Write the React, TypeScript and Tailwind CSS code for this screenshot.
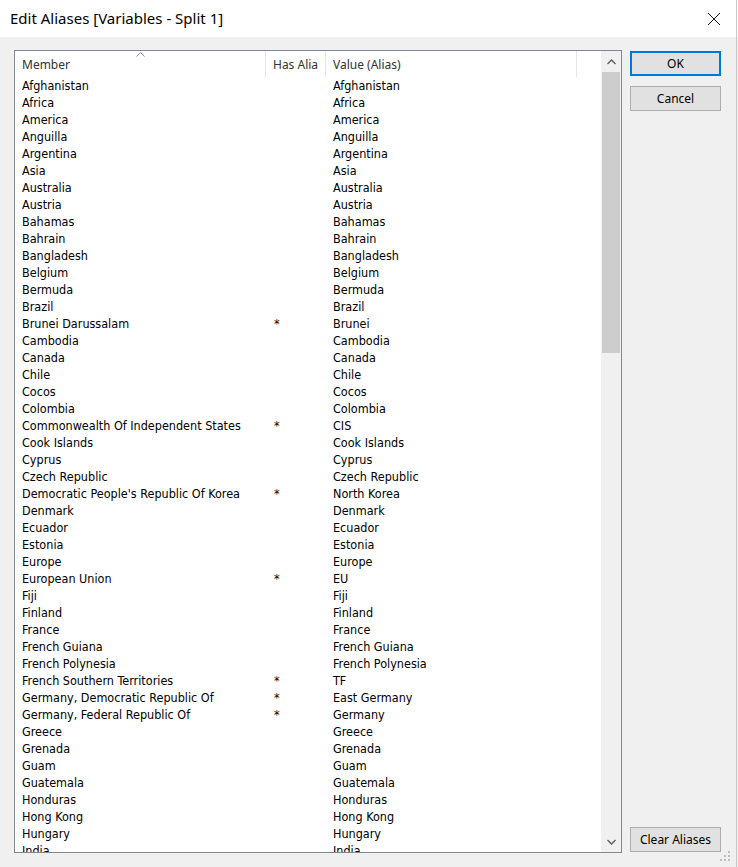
import React from 'react'

type Row = { member: string; alias: string; has?: boolean }

const rows: Row[] = [
  { member: 'Afghanistan', alias: 'Afghanistan' },
  { member: 'Africa', alias: 'Africa' },
  { member: 'America', alias: 'America' },
  { member: 'Anguilla', alias: 'Anguilla' },
  { member: 'Argentina', alias: 'Argentina' },
  { member: 'Asia', alias: 'Asia' },
  { member: 'Australia', alias: 'Australia' },
  { member: 'Austria', alias: 'Austria' },
  { member: 'Bahamas', alias: 'Bahamas' },
  { member: 'Bahrain', alias: 'Bahrain' },
  { member: 'Bangladesh', alias: 'Bangladesh' },
  { member: 'Belgium', alias: 'Belgium' },
  { member: 'Bermuda', alias: 'Bermuda' },
  { member: 'Brazil', alias: 'Brazil' },
  { member: 'Brunei Darussalam', alias: 'Brunei', has: true },
  { member: 'Cambodia', alias: 'Cambodia' },
  { member: 'Canada', alias: 'Canada' },
  { member: 'Chile', alias: 'Chile' },
  { member: 'Cocos', alias: 'Cocos' },
  { member: 'Colombia', alias: 'Colombia' },
  { member: 'Commonwealth Of Independent States', alias: 'CIS', has: true },
  { member: 'Cook Islands', alias: 'Cook Islands' },
  { member: 'Cyprus', alias: 'Cyprus' },
  { member: 'Czech Republic', alias: 'Czech Republic' },
  { member: "Democratic People's Republic Of Korea", alias: 'North Korea', has: true },
  { member: 'Denmark', alias: 'Denmark' },
  { member: 'Ecuador', alias: 'Ecuador' },
  { member: 'Estonia', alias: 'Estonia' },
  { member: 'Europe', alias: 'Europe' },
  { member: 'European Union', alias: 'EU', has: true },
  { member: 'Fiji', alias: 'Fiji' },
  { member: 'Finland', alias: 'Finland' },
  { member: 'France', alias: 'France' },
  { member: 'French Guiana', alias: 'French Guiana' },
  { member: 'French Polynesia', alias: 'French Polynesia' },
  { member: 'French Southern Territories', alias: 'TF', has: true },
  { member: 'Germany, Democratic Republic Of', alias: 'East Germany', has: true },
  { member: 'Germany, Federal Republic Of', alias: 'Germany', has: true },
  { member: 'Greece', alias: 'Greece' },
  { member: 'Grenada', alias: 'Grenada' },
  { member: 'Guam', alias: 'Guam' },
  { member: 'Guatemala', alias: 'Guatemala' },
  { member: 'Honduras', alias: 'Honduras' },
  { member: 'Hong Kong', alias: 'Hong Kong' },
  { member: 'Hungary', alias: 'Hungary' },
  { member: 'India', alias: 'India' },
]

const ui = "font-['Noto_Sans','Open_Sans',sans-serif]"
const list = "font-['DejaVu_Sans_Condensed','DejaVu_Sans',sans-serif]"

function Button({ label, primary }: { label: string; primary?: boolean }) {
  return (
    <button
      className={`w-[91px] h-[25px] bg-[#e1e1e1] text-[12px] text-black flex items-center justify-center ${ui} ${
        primary ? 'border-2 border-[#0078d7]' : 'border border-[#adadad]'
      }`}
    >
      {label}
    </button>
  )
}

export default function App() {
  return (
    <div className="w-[738px] h-[867px] bg-[#f0f0f0] relative overflow-hidden">
      {/* Title bar */}
      <div className="h-[37px] bg-white flex items-center justify-between pl-[10px] pr-[16px]">
        <span className={`text-[15px] text-black ${ui}`}>Edit Aliases [Variables - Split 1]</span>
        <svg width="14" height="14" viewBox="0 0 14 14" className="mr-[1px]">
          <path d="M1 1 L13 13 M13 1 L1 13" stroke="#111" strokeWidth="1" fill="none" />
        </svg>
      </div>

      {/* Body */}
      <div className="flex pl-[14px] pt-[13px] gap-[8px]">
        {/* List box */}
        <div className="w-[608px] h-[803px] border border-[#828790] bg-white flex overflow-hidden">
          <div className="w-[586px] flex flex-col overflow-hidden">
            {/* Header */}
            <div className={`h-[26px] flex shrink-0 text-[12px] text-[#333] ${ui}`}>
              <div className="w-[251px] border-r border-[#e5e5e5] pl-[7px] pt-[2px] flex items-center relative">
                Member
                <svg width="9" height="5" viewBox="0 0 9 5" className="absolute left-[121px] top-[1px]">
                  <path d="M0.5 4.5 L4.5 0.5 L8.5 4.5" stroke="#888" strokeWidth="1" fill="none" />
                </svg>
              </div>
              <div className="w-[60px] border-r border-[#e5e5e5] pl-[7px] pt-[2px] flex items-center">
                <span className="block w-[45px] overflow-hidden whitespace-nowrap">Has Alias</span>
              </div>
              <div className="w-[251px] border-r border-[#e5e5e5] pl-[7px] pt-[2px] flex items-center">Value (Alias)</div>
              <div className="flex-1" />
            </div>
            {/* Rows */}
            <div className={`flex flex-col pt-[1px] text-[12.5px] text-black ${list}`}>
              {rows.map((r) => (
                <div key={r.member} className="h-[17px] flex items-center shrink-0 whitespace-nowrap">
                  <div className="w-[251px] pl-[7px]">{r.member}</div>
                  <div className="w-[60px] pl-[8px]">{r.has ? '*' : ''}</div>
                  <div className="w-[251px] pl-[7px]">{r.alias}</div>
                </div>
              ))}
            </div>
          </div>
          {/* Scrollbar */}
          <div className="w-[20px] bg-[#f0f0f0] flex flex-col">
            <div className="h-[21px] flex items-center justify-center">
              <svg width="9" height="6" viewBox="0 0 9 6">
                <path d="M0.5 5 L4.5 1 L8.5 5" stroke="#606060" strokeWidth="1.5" fill="none" />
              </svg>
            </div>
            <div className="h-[281px] mx-[1px] bg-[#cdcdcd]" />
            <div className="flex-1" />
            <div className="h-[21px] flex items-center justify-center">
              <svg width="9" height="6" viewBox="0 0 9 6">
                <path d="M0.5 1 L4.5 5 L8.5 1" stroke="#606060" strokeWidth="1.5" fill="none" />
              </svg>
            </div>
          </div>
        </div>

        {/* Buttons */}
        <div className="flex flex-col pt-[1px] h-[803px]">
          <Button label="OK" primary />
          <div className="h-[10px]" />
          <Button label="Cancel" />
          <div className="flex-1" />
          <div className="mb-[1px]">
            <Button label="Clear Aliases" />
          </div>
        </div>
      </div>

      {/* Size grip */}
      <svg width="12" height="12" viewBox="0 0 12 12" className="absolute right-[6px] bottom-[4px]">
        <rect x="8" y="0" width="2" height="2" fill="#bcbcbc" />
        <rect x="4" y="4" width="2" height="2" fill="#bcbcbc" />
        <rect x="8" y="4" width="2" height="2" fill="#bcbcbc" />
        <rect x="0" y="8" width="2" height="2" fill="#bcbcbc" />
        <rect x="4" y="8" width="2" height="2" fill="#bcbcbc" />
        <rect x="8" y="8" width="2" height="2" fill="#bcbcbc" />
      </svg>

      {/* Window edge */}
      <div className="absolute right-[1px] top-0 bottom-0 w-[1px] bg-[#c8c8c8]" />
    </div>
  )
}
